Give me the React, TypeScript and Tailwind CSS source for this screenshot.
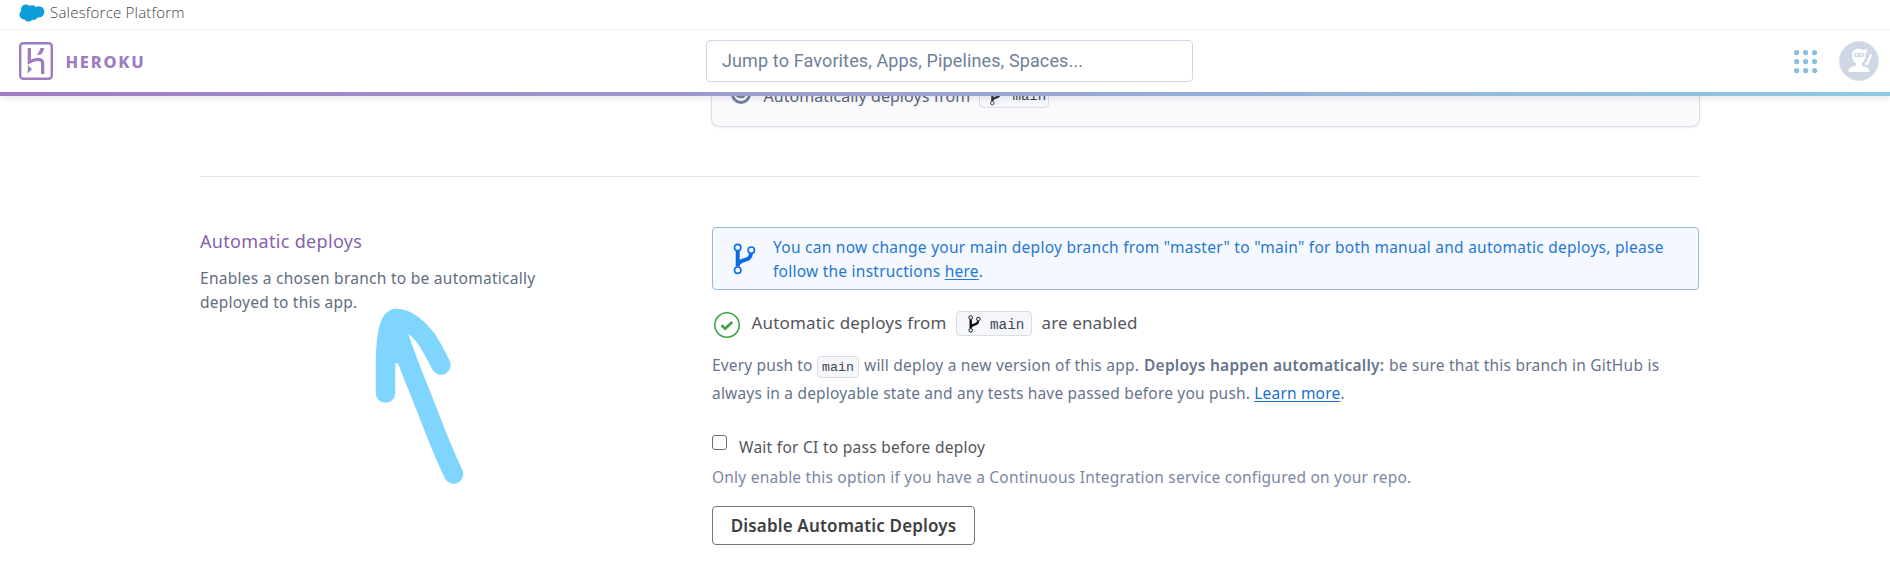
import type { ReactNode } from "react";

function BranchIcon({ className }: { className: string }) {
  return (
    <svg viewBox="0 0 22 32" className={className} fill="none" stroke="currentColor">
      <circle cx="4.2" cy="4.6" r="3.2" strokeWidth="1.6" />
      <circle cx="17.8" cy="7.2" r="3.2" strokeWidth="1.6" />
      <circle cx="4.2" cy="27.2" r="3.2" strokeWidth="1.6" />
      <path d="M4.2 8v15.5" strokeWidth="4" />
      <path d="M4.6 22c1-7 12.6-2.600 12.700-11" strokeWidth="4" />
    </svg>
  );
}

function SalesforceCloud() {
  return (
    <svg viewBox="0 0 26 18" className="h-[18px] w-[26px]" fill="#0d9ddb">
      <circle cx="7" cy="5.400" r="5" />
      <circle cx="13.300" cy="5.500" r="4.300" />
      <circle cx="19.700" cy="7.900" r="5.700" />
      <circle cx="5" cy="10.800" r="4.600" />
      <circle cx="9.500" cy="13.200" r="4.400" />
      <circle cx="14.500" cy="11.600" r="4.300" />
    </svg>
  );
}

function HerokuMark() {
  return (
    <svg viewBox="0 0 34 38" className="h-[38px] w-[34px]" fill="none" stroke="#9e7cc1">
      <rect x="1.200" y="1.200" width="31.600" height="35.600" rx="3" strokeWidth="2.400" />
      <path d="M10.300 6v14c3-1.500 6-2.600 9-2.600 3.400 0 4.400 1.800 4.400 4.600v10" strokeWidth="3.300" />
      <path d="M21.500 6h3.800c-.4 2.600-1.700 4.700-3.600 6.700h-3.800c1.800-2.200 3-4.300 3.600-6.700z" fill="#9e7cc1" stroke="none" />
      <path d="M8.800 23v8.500l4.200-4.250z" fill="#9e7cc1" stroke="none" />
    </svg>
  );
}

function AppGrid() {
  const steps = [2.6, 11.6, 20.6];
  return (
    <svg viewBox="0 0 24 24" className="mt-[2px] size-6" fill="#86bfe3">
      {steps.map((y) => steps.map((x) => <circle key={`${x}-${y}`} cx={x} cy={y} r="2.600" />))}
    </svg>
  );
}

function NinjaAvatar() {
  return (
    <svg viewBox="0 0 40 40" className="size-10">
      <circle cx="20" cy="20" r="19.500" fill="#cfd7e6" stroke="#dcdfe6" />
      <g fill="#fff">
        <path d="M13 14c0-4 3-6.300 6.500-6.300 2 0 3.300.5 4.500 1.500l4.500-1.200-1 2 1.500 1.500-2.500.5c.3 5-1 8-3.500 10.500v2.500c4 .500 7.500 2 7.500 5q0 1-1.500 1H11q-1.500 0-1.500-1c0-3 3-4.500 7.500-5v-2.500c-2.500-2-4-4.500-4-8.500z" />
        <path d="M31 13l2.200.8-4.500 10.500-3.200-1.300 1-1.800 1.100.4z" />
      </g>
      <rect x="15" y="12" width="10" height="4" rx="1.500" fill="#cfd7e6" />
      <path d="M16.500 13.300h2.500v1.200h-2.500zM21 13.300h2.500v1.200H21z" fill="#fff" />
    </svg>
  );
}

function CheckBadge() {
  return (
    <svg viewBox="0 0 26 26" className="size-[26px]" fill="none" stroke="#3f9f44">
      <circle cx="13" cy="13" r="12.200" strokeWidth="1.500" />
      <path d="M7.500 13.300l3.700 3.400 7-6.700" strokeWidth="2.600" />
    </svg>
  );
}

function Tag({ children, className }: { children: ReactNode; className: string }) {
  return (
    <span
      className={`inline-flex items-center rounded-[4px] border border-[#d8dde6] bg-[#f5f7fb] font-['Liberation_Mono',monospace] text-[#3f4656] ${className}`}
    >
      {children}
    </span>
  );
}

function Header() {
  return (
    <header className="relative z-10 h-24 shrink-0 bg-white shadow-[0_2px_6px_rgba(60,60,90,0.12)]">
      <div className="flex h-[30px] items-start gap-[5px] border-b border-[#edf1f5] pl-[19px]">
        <div className="pt-[3.500px]">
          <SalesforceCloud />
        </div>
        <span className="pt-[2px] font-['Open_Sans',sans-serif] text-[15px] leading-[21px] font-light tracking-[0.220px] text-[#444]">
          Salesforce Platform
        </span>
      </div>
      <div className="flex h-[62px] items-start pl-[19px]">
        <div className="flex w-[687px] items-center pt-3">
          <HerokuMark />
          <span className="ml-[12.500px] pt-[2px] font-['Noto_Sans',sans-serif] text-[16.500px] leading-5 font-extrabold tracking-[1.750px] text-[#9e7cc1]">
            HEROKU
          </span>
        </div>
        <div className="mt-[10px] flex h-[42px] w-[487px] items-center rounded-[4px] border border-[#cfd7e6] pb-px pl-[15px] font-['Roboto',sans-serif] text-[18px] tracking-[0.130px] text-[#6f7f9a]">
          Jump to Favorites, Apps, Pipelines, Spaces...
        </div>
        <div className="mt-[11px] ml-auto flex items-center gap-[21px] pr-[11px]">
          <AppGrid />
          <NinjaAvatar />
        </div>
      </div>
      <div className="h-1 bg-linear-to-r from-[#a07cbf] to-[#8ccae6]" />
    </header>
  );
}

function PreviousCard() {
  return (
    <div className="ml-[511px] flex h-[61px] items-start rounded-b-[8px] border border-t-0 border-[#d8dde6] bg-[#fafafd] pt-[17px] pl-[18.500px] shadow-[0_1px_2px_rgba(60,60,90,0.08)]">
      <svg viewBox="0 0 20 20" className="mt-px size-5" fill="none" stroke="#73819a">
        <circle cx="10" cy="10" r="8.500" strokeWidth="3" />
        <path d="M4.500 9.500c2 4 7.500 5.500 9.500 1v-4" strokeWidth="2.200" />
      </svg>
      <span className="mt-px ml-[13px] w-[206.500px] text-[16px] leading-[24px] tracking-[0.060px] text-[#596579]">
        Automatically deploys from
      </span>
      <Tag className="-mt-[1px] ml-[8.500px] h-[26px] w-[70px] gap-[11px] pt-[3px] pl-[10px] text-[14px]">
        <BranchIcon className="h-[18px] w-[12px] text-[#2d3340]" />
        main
      </Tag>
    </div>
  );
}

function PointerArrow() {
  return (
    <svg
      viewBox="0 0 90 178"
      className="pointer-events-none absolute top-[307px] left-[375px] h-[178px] w-[90px]"
      fill="none"
      stroke="#80d5ff"
      strokeWidth="19.500"
      strokeLinecap="round"
      strokeLinejoin="round"
    >
      <path d="M10.500 86V52C11 35 13 12 21 11.500C32 11 44 22 50 30C55 37 61 48 66 58" />
      <path d="M21 20C29 48 43 80 52 103C60 124 68 144 74 157L78.500 167" />
      <path d="M20 18L24 50" strokeWidth="14" />
    </svg>
  );
}

export default function App() {
  return (
    <div className="relative flex h-[572px] flex-col overflow-hidden bg-white font-['Noto_Sans',sans-serif] whitespace-nowrap">
      <Header />
      <main className="-mt-[30px] ml-[200px] w-[1500px]">
        <PreviousCard />
        <div className="mt-[49px] border-t border-[#e3e7f0]" />
        <section className="mt-[50px] flex">
          <div className="w-[512px]">
            <h2 className="pt-px text-[18px] leading-[27px] tracking-[0.330px] text-[#8463a8]">Automatic deploys</h2>
            <p className="mt-[11px] text-[15.500px] leading-6 text-[#626d80]">
              <span className="block tracking-[0.270px]">Enables a chosen branch to be automatically</span>
              <span className="block tracking-[0.230px]">deployed to this app.</span>
            </p>
          </div>

          <div className="w-[987px]">
            <div className="flex h-[63px] items-center rounded-[4px] border border-[#96b9e3] bg-[#f5f9ff] text-[15.500px] leading-6 text-[#2577d4]">
              <BranchIcon className="mt-px ml-[20px] h-[32px] w-[23px] text-[#0d6be0]" />
              <p className="ml-[17px]">
                <span className="block tracking-[0.260px]">
                  You can now change your main deploy branch from "master" to "main" for both manual and automatic
                  deploys, please
                </span>
                <span className="block tracking-[0.240px]">
                  follow the instructions{" "}
                  <a href="#" className="underline underline-offset-2">
                    here
                  </a>
                  .
                </span>
              </p>
            </div>

            <div className="mt-[20px] flex h-[27px] items-center pl-[2px] text-[17px] leading-6 text-[#53565b]">
              <div className="pt-0.5">
                <CheckBadge />
              </div>
              <span className="ml-[11.500px] w-[204.500px] pb-[2px] tracking-[0.180px]">Automatic deploys from</span>
              <Tag className="h-[25px] w-[75.500px] gap-[9.500px] pl-[10.500px] text-[14.300px]">
                <BranchIcon className="h-[18px] w-[13px] text-black" />
                <span className="pt-[2px]">main</span>
              </Tag>
              <span className="ml-[10px] pb-[2px] tracking-[0.120px]">are enabled</span>
            </div>

            <div className="mt-[14px] text-[15.500px] leading-7 text-[#67748c]">
              <p className="flex h-7 items-center">
                <span className="w-[105px] tracking-[0.150px]">Every push to</span>
                <Tag className="mt-[3px] h-[22px] w-[42px] justify-center pt-[2px] text-[13.300px] leading-5">main</Tag>
                <span className="ml-[5px] w-[280px] tracking-[0.220px]">will deploy a new version of this app.</span>
                <strong className="w-[245px] font-semibold tracking-[0.250px]">Deploys happen automatically:</strong>
                <span className="tracking-[0.230px]">be sure that this branch in GitHub is</span>
              </p>
              <p className="tracking-[0.180px]">
                always in a deployable state and any tests have passed before you push.{" "}
                <a href="#" className="text-[#1a6ed0] underline underline-offset-2">
                  Learn more
                </a>
                .
              </p>
            </div>

            <label className="mt-[27px] flex items-start text-[15.500px] leading-6 text-[#53565b]">
              <input
                type="checkbox"
                className="mt-[1px] size-[15px] appearance-none rounded-[3px] border border-[#6b6b6b] bg-white"
              />
              <span className="ml-[12px] pt-px tracking-[0.270px]">Wait for CI to pass before deploy</span>
            </label>
            <p className="mt-[6px] text-[15.500px] leading-6 tracking-[0.220px] text-[#7b88a3]">
              Only enable this option if you have a Continuous Integration service configured on your repo.
            </p>
            <button className="mt-[17px] flex h-[39px] w-[263px] items-center justify-center rounded-[4px] border border-[#767676] bg-white text-[17px] font-semibold tracking-[0.160px] text-[#3e3f42]">
              Disable Automatic Deploys
            </button>
          </div>
        </section>
      </main>
      <PointerArrow />
    </div>
  );
}
